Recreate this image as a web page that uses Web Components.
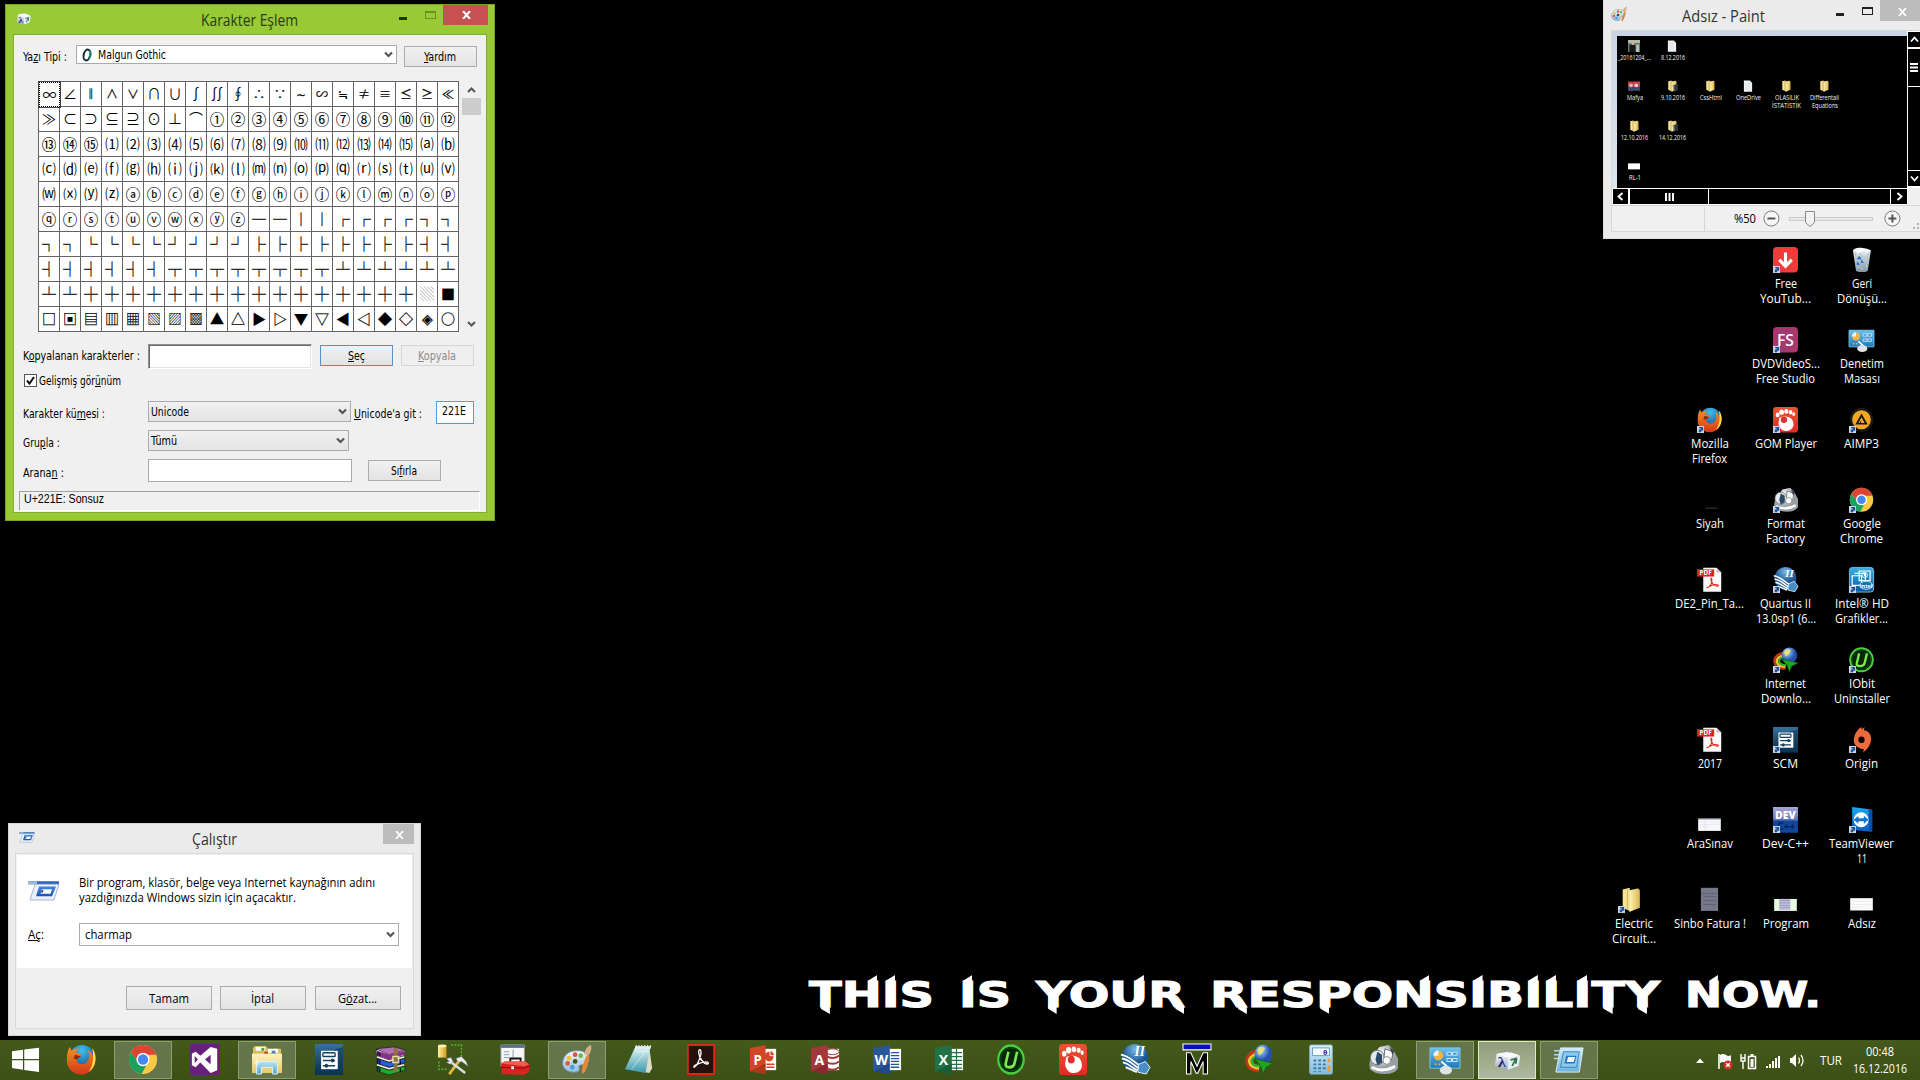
<!DOCTYPE html>
<html lang="tr">
<head>
<meta charset="utf-8">
<title>Masaüstü</title>
<style>
html,body{margin:0;width:1920px;height:1080px;overflow:hidden;background:#000}
body{font-family:"Open Sans","Noto Sans",sans-serif;font-size:12px;color:#000}
</style>
</head>
<body>
<desk-top></desk-top>
<script>
const grad=(id,a,b,x='0',y='1')=>`<linearGradient id="${id}" x2="${x}" y2="${y}"><stop stop-color="${a}"/><stop offset="1" stop-color="${b}"/></linearGradient>`;
const office=(c,d,l,inner)=>`<path d="M18 5h13v22H18z" fill="#fff"/>${inner}<path d="M1 4 19 1v30L1 28z" fill="${c}"/><path d="M1 28 19 31V20z" fill="${d}" opacity=".5"/><text x="10" y="21.5" font-family="Open Sans,sans-serif" font-weight="700" font-size="15" fill="#fff" text-anchor="middle">${l}</text>`;
const pdf=`<path d="M8 1h17l6 6v24H8z" fill="#fafafa"/><path d="M25 1v6h6z" fill="#c9c9c9"/><path d="M0 3h22v9H0z" fill="#e02418"/><text x="11" y="10.5" font-size="8" font-weight="700" font-family="Open Sans,sans-serif" fill="#fff" text-anchor="middle">PDF</text><path d="M13 26c3-1 7-5 6-11-1-3-2 1 0 4 2 4 6 6 8 5s-3-3-8-1-7 4-6 3z" fill="none" stroke="#e02418" stroke-width="1.3"/>`;
const folder=`<defs>${grad('f','#fff3ae','#d9b44c','1','0')}</defs><path d="M6 3l9-2v29l-9-4z" fill="#f7e391"/><path d="M15 4l10-2q3 0 3 4v20l-13 5z" fill="url(#f)"/><path d="M12 3v26" stroke="#caa544"/><path d="M15 4v27" stroke="#fff6c8"/>`;
const ICONS={
start:`<path d="M0 5.500l13-2v12H0zM14.500 3.300 32 1v14.500H14.500zM0 17h13v12L0 27zM14.500 17H32v15l-17.500-2.500z" fill="#fff"/>`,
firefox:`<defs><radialGradient id="b" cx=".5" cy=".2" r=".8"><stop stop-color="#3fc0ee"/><stop offset="1" stop-color="#123a82"/></radialGradient>${grad('o','#f6921e','#d4371a')}</defs><circle cx="17" cy="15" r="14" fill="url(#b)"/><path d="M29 6c5 9 3 21-8 25C10 34-1 26 1 14c0-4 1-8 3-11l2 4q3-3 7-2l-3 4c4 0 7 1 6 4l-5 3c1 4 5 6 9 4 5-2 6-8 3-14 4 2 6 6 6 8z" fill="url(#o)"/><path d="M28 4c6 8 4 20-4 25 5-7 6-15 4-25z" fill="#ffe04a"/><path d="M16 13l-5 3-3-1 2-4z" fill="#8c2a12"/>`,
chrome:`<circle cx="16" cy="16" r="15" fill="#fbc943"/><path d="M3 8.500A15 15 0 0 1 29 8.500L30 11H16a6 6 0 0 0-5.500 7z" fill="#dc4437"/><path d="M3 8.500A15 15 0 0 0 14.500 31L21 19a6 6 0 0 1-10.500-1z" fill="#1ba15e"/><circle cx="16" cy="16" r="7" fill="#fff"/><circle cx="16" cy="16" r="5.400" fill="#4688f1"/>`,
vs:`<path d="M0 0h32v32H0z" fill="#68217a"/><path d="M22 3l7 2v22l-7 3-11-11-5 5-4-2V10l4-2 5 4zM5 12.500v7L8.500 16zM22 11l-6 5 6 5z" fill="#fff"/>`,
explorer:`<defs>${grad('e','#fff3bd','#e8c766')}${grad('e2','#bfe6f7','#4ba0ce')}</defs><path d="M1 4l2-2h12l2 3h14v25H1z" fill="#d8bd62"/><path d="M4 3h10v4H4zM17 5h11v4H17z" fill="#fff"/><path d="M10 4h3v3h-3z" fill="#40a545"/><path d="M13 8h4v3h-4z" fill="#d5382f"/><path d="M21 7h4v3h-4z" fill="#3d80d0"/><path d="M0 10h32v20H0z" fill="url(#e)"/><path d="M5 31V20q0-2 2-2h18q2 0 2 2v11h-5v-7H10v7z" fill="url(#e2)" stroke="#dff4fb"/><path d="M5 14l1 4 3 1-3 1-1 4-1-4-3-1 3-1z" fill="#fff" opacity=".6"/>`,
scm:`<defs>${grad('s','#34729a','#0b2b47')}</defs><path d="M0 0h32v32H0z" fill="url(#s)"/><path d="M0 32C4 18 14 6 32 3v29z" fill="#0b3a5d" opacity=".6"/><rect x="7" y="7" width="19" height="19" fill="#fff"/><g fill="none" stroke="#14415f" stroke-width="1.500"><rect x="9" y="9" width="14" height="4" rx="1"/><path d="M9 17h14M9 22.500h14"/></g><circle cx="20" cy="17" r="2" fill="#14415f"/><circle cx="13" cy="22.500" r="2" fill="#14415f"/>`,
rar:`<g stroke="#111" stroke-width=".6"><path d="M0 7l3-2 17-1 11 2-1 6-15 4-14-3z" fill="#e8e6e6"/><path d="M0 5l19-2 12 3-17 5z" fill="#b56fb9"/><path d="M1 15l13 4 17-4v4l-17 5L1 20z" fill="#2f57e6"/><path d="M1 23l13 4 17-4v4l-17 5L1 28z" fill="#1fa832"/></g><path d="M1 7l13 4 16-4v4l-16 5-13-4z" fill="#8b2f8c"/><path d="M1 13.500l13 4 16-4M1 21.500l13 4 16-4" stroke="#f0efe8" stroke-width="1.600" fill="none"/><path d="M2 8v4m2-3v4M2 15v5m2-4v5M2 23v5m2-4v5M26 17v4M26 25v4" stroke="#0c0c30" stroke-width="1.300"/><path d="M19 4h4v25h-4z" fill="#8c7440"/><path d="M18 13h6v6h-6z" fill="none" stroke="#e6d9a0" stroke-width="1.500"/>`,
tools:`<defs>${grad('t','#fff0a0','#d49a1d','1','0')}</defs><path d="M0 2h9v12H0z" fill="url(#t)"/><ellipse cx="4.500" cy="2" rx="4.500" ry="1.500" fill="#fff4b5"/><path d="M14 1h11v12M1 18v8h10" fill="none" stroke="#56b531" stroke-width="1.500" stroke-dasharray="2 1.500"/><path d="M12 31l11-14" stroke="#e3b83d" stroke-width="3"/><path d="M13 18l16 12" stroke="#d9dde0" stroke-width="2.600"/><path d="M9 15l5-1 2 4-3 3-4-2 3-1zM19 15l6-2 5 5 2 5-4-3-3-2-3 1z" fill="#eceff1" stroke="#73797d" stroke-width=".6"/>`,
toolbox:`<path d="M1 1h25v22H1z" fill="#f8f8f8" stroke="#9a9ca0"/><path d="M1 1h25v3H1z" fill="#56718e"/><path d="M4 8h6M4 11h6M4 14h6M14 6v10" stroke="#8899ac"/><path d="M11 19v-4h11v4" fill="none" stroke="#1c1313" stroke-width="2"/><path d="M1 20l4-2h22l4 3v8l-6 3-23-1z" fill="#d8231f"/><path d="M1 20l4-2h22l4 3-5 2z" fill="#f35b4f"/><path d="M1 24l24 1 6-2" stroke="#7c0d0d" fill="none"/><path d="M12 23h3v3h-3z" fill="#e8e8e8"/>`,
paint:`<defs>${grad('p','#f0f8fd','#94bddb')}</defs><path d="M15 7C26 6 30 13 28 19c-2 4-8 1-10 4 0 3 2 5-3 6C6 30-1 25 1 17 3 10 9 7 15 7z" fill="url(#p)" stroke="#6796b8"/><circle cx="14" cy="11" r="2.500" fill="#e74e3c"/><circle cx="7.500" cy="14.500" r="2.500" fill="#f5bf2e"/><circle cx="6" cy="20" r="2.500" fill="#e35c36"/><circle cx="11" cy="24" r="2.500" fill="#459de2"/><circle cx="20" cy="12" r="2.500" fill="#68ba46"/><circle cx="14" cy="18" r="2.500" fill="#3d5514"/><path d="M22 31c-3-4 3-16 4-19h3c0 6-3 17-7 19z" fill="#e68935"/><path d="M24 11c0-5 3-9 7-10 1 4-1 9-3 11z" fill="#d7b08a"/>`,
notepad:`<defs>${grad('n','#e2f5f7','#3b99ab')}</defs><path d="M27 4l3 21-3 5-6-1z" fill="#e0dcc8"/><path d="M12 3h16l-5 27L1 26z" fill="url(#n)"/><path d="M12 8h14M8 26l14-17" stroke="#fff" opacity=".5"/><path d="M12 2.500h17M13 1v4m3-4v4m3-4v4m3-4v4m3-4v4m3-4v4" stroke="#e6ecec"/>`,
adobe:`<path d="M1 1h30v30H1z" fill="#24110d" stroke="#dd2516" stroke-width="2.200"/><path d="M8 24c-2-2 13-7 16-5 2 2-3 3-7-2-5-6-4-12-2-11 3 2-2 16-7 18z" fill="none" stroke="#fff" stroke-width="1.500"/>`,
ppt:office('#d24625','#8a2611','P','<circle cx="23" cy="13" r="5" fill="#d24625"/><path d="M24 12V7a5 5 0 0 1 5 5z" fill="#d24625" stroke="#fff"/><path d="M20 21h9M20 24h9" stroke="#d24625" stroke-width="1.500"/>'),
access:office('#a4373a','#6d1c20','A','<ellipse cx="24" cy="8" rx="7" ry="3" fill="#fff" stroke="#a4373a"/><path d="M17 12q7 5 14 0M17 18q7 5 14 0M17 24q7 5 14 0" stroke="#a4373a" stroke-width="2" fill="none"/>'),
word:office('#2b579a','#173a72','W','<path d="M20 9h9M20 12h9M20 15h9M20 18h9M20 21h9M20 24h9" stroke="#2b579a" stroke-width="1.300"/>'),
excel:office('#217346','#0f4b29','X','<path d="M18 9h12M18 13h12M18 17h12M18 21h12M18 25h12M24 5v22" stroke="#217346" stroke-width="1.300"/>'),
iobit:`<circle cx="16" cy="16" r="14.500" fill="#06250b" stroke="#49cf3e" stroke-width="2.500"/><circle cx="16" cy="16" r="12" fill="none" stroke="#0a5415"/><path d="M13 8l-3 12q-1 4 4 4t6-4l3-12" fill="none" stroke="#7aea4d" stroke-width="3"/>`,
gom:`<defs>${grad('g','#ee5230','#e02b25')}</defs><rect width="32" height="32" rx="4" fill="url(#g)"/><path d="M8 14c3-3 15-3 17 3 4 8-2 13-8 13-7 0-10-6-10-10z" fill="#fff"/><circle cx="14" cy="16" r="4" fill="#dc332b"/><g fill="#fff"><ellipse cx="6" cy="10" rx="2.500" ry="3"/><ellipse cx="11" cy="6.500" rx="3" ry="3.300"/><ellipse cx="17" cy="5.500" rx="2.600" ry="3"/><ellipse cx="22.500" cy="6.500" rx="2.300" ry="2.800"/><ellipse cx="26.500" cy="9" rx="1.800" ry="2.300"/></g>`,
quartus:`<defs><radialGradient id="q" cx=".5" cy=".2"><stop stop-color="#7bbbe7"/><stop offset="1" stop-color="#195591"/></radialGradient></defs><circle cx="16" cy="14" r="14" fill="url(#q)"/><text x="21" y="12" text-anchor="middle" font-family="Liberation Serif,serif" font-weight="700" font-style="italic" font-size="14" fill="#fff">II</text><path d="M1 11c8 1 13 7 20 11M2 15c8 1 12 7 18 10M3 19c6 1 10 6 16 8M6 24c4 1 8 4 12 5" fill="none" stroke="#fff" stroke-width="1.900"/><path d="M20 21l7-3 5 6-4 7-9-2z" fill="#468fc6" stroke="#e3f2fc"/>`,
m:`<path d="M0 0h32v6H0z" fill="#0712b8" stroke="#fff" stroke-width="1.200"/><path d="M4 31V9h5l7 14 7-14h5v22h-5V18l-6 12h-2L9 18v13z" fill="#000" stroke="#fff" stroke-width="1.200"/>`,
idm:`<defs><radialGradient id="i" cx=".35" cy=".3"><stop stop-color="#fff4a0"/><stop offset=".35" stop-color="#7fb2df"/><stop offset="1" stop-color="#2450b4"/></radialGradient></defs><path d="M15 7C6 8 1 13 2 19c1 6 7 9 14 8" fill="none" stroke="#c8331f" stroke-width="3"/><path d="M15 10C8 11 4 15 5 19c1 4 6 6 11 6" fill="none" stroke="#f2c42e" stroke-width="3"/><path d="M15 13c-5 0-8 3-7 6 1 3 4 4 9 4" fill="none" stroke="#2fb33f" stroke-width="2.600"/><circle cx="21" cy="10.500" r="10" fill="url(#i)"/><path d="M14 6q4-5 9-2l-3 5-4 3z" fill="#f3e66b" opacity=".8"/><path d="M11 15l21 5-8 4-3 7-3-8z" fill="#21a51f" stroke="#0c5d12" stroke-width=".8"/>`,
calc:`<defs>${grad('c','#ddf1fc','#81bbdd')}</defs><rect x="4" y="1" width="24" height="30" rx="1.500" fill="url(#c)" stroke="#8fbcd7"/><path d="M7 4h18v8H7z" fill="#f4fbff" stroke="#6699b9"/><text x="23" y="11" text-anchor="end" font-family="Liberation Mono,monospace" font-size="8" font-weight="700" fill="#215">0</text><g fill="#3c7ba6"><path d="M8 16h3v2H8zm5 0h3v2h-3zm5 0h3v2h-3zM8 20h3v2H8zm5 0h3v2h-3zm5 0h3v2h-3zM8 24h3v2H8zm5 0h3v2h-3zm5 0h3v2h-3zM8 28h3v1H8zm5 0h3v1h-3z"/></g><path d="M23 15h3v4h-3zM23 22h3v7h-3z" fill="#e1a33f"/>`,
format:`<defs><radialGradient id="m" cx=".4" cy=".3"><stop stop-color="#fff"/><stop offset="1" stop-color="#9a9fa3"/></radialGradient></defs><path d="M12 3l10-2 5 5 5 9v10q-3 6-14 6T2 26q-2-8 3-13z" fill="url(#m)"/><circle cx="10" cy="14" r="7.500" fill="#e5e9ec" stroke="#6d7378"/><path d="M10 8l5 3v8l-5 3-2-6z" fill="#294a68"/><path d="M18 5l9 3-2 9-8-3z" fill="#f5f7f8" stroke="#62696e"/><circle cx="20" cy="17" r="4" fill="#fff" stroke="#888"/><path d="M23 3l5 4-2 4z" fill="#33434e"/><path d="M4 24q12 6 25-1" stroke="#fff" stroke-width="3" fill="none"/>`,
control:`<defs>${grad('k','#6cc2ee','#1e77b8')}</defs><path d="M0 4h32v21H0z" fill="url(#k)" stroke="#7cc7ec"/><circle cx="9" cy="12" r="5" fill="#f4b33f"/><path d="M9 12V6.500a5.500 5.500 0 0 0-5.500 5.500z" fill="#e8f3fa"/><path d="M18 8.500h5v3h-5zm6 0h5v3h-5zM18 15h5v3h-5zm6 0h5v3h-5z" fill="#3a93cf" stroke="#d9effb"/><path d="M5 20h2v2H5zm4 0h2v2H9z" fill="#f4b33f"/><path d="M12 18l6 5" stroke="#fff" stroke-width="2"/><ellipse cx="17" cy="27" rx="6.500" ry="4.500" fill="#dfe3e6"/>`,
charmap:`<defs>${grad('h','#fafcff','#a3acc2')}</defs><path d="M4 8l13-3 12 4 2 4-2 11-12 5L2 24z" fill="url(#h)"/><path d="M17 12l14-2-2 14-12 5z" fill="#e6edf5"/><path d="M4 8l13-3 13 5-13 3z" fill="#fafafc"/><path d="M12 6q3-4 7 0" fill="none" stroke="#8b93a4"/><text x="10" y="25" text-anchor="middle" font-family="Liberation Serif,serif" font-weight="700" font-size="19" fill="#1f2a78">λ</text><path d="M20 16l6-2-4 10M27 14l-1 7" fill="none" stroke="#2d7548" stroke-width="2"/>`,
run:`<defs>${grad('r','#d2edfb','#6cb2de')}</defs><path d="M0 7h8M0 11h7M0 15h5" stroke="#aed7ef" stroke-width="1.500"/><path d="M7 4h24l-4 25H2z" fill="url(#r)" stroke="#d5effa"/><path d="M10 8h17l-3 16H7z" fill="#8fcaec" stroke="#3785bd"/><path d="M13 12h11l-2 8H11z" fill="#2e74b8"/><path d="M15 13.500h7.500L21 18.500h-7.500z" fill="#eef8fd"/>`,
runblue:`<defs>${grad('r','#3f86e8','#1b52b8')}</defs><path d="M0 3h31v4H0z" fill="#2f63b8"/><path d="M0 3h9v4H0z" fill="#9bb9e2"/><path d="M7 7h24l-5 21H2z" fill="#eaf1f9" stroke="#9aabc2"/><path d="M11 10h17l-4 13H8z" fill="url(#r)"/><path d="M14 13.500h10l-1.500 6H12.500z" fill="#f8fbff"/><path d="M13.500 18l1.500-3" stroke="#333" stroke-width="1.500"/>`,
fyt:`<rect width="32" height="32" rx="5" fill="#ef3b3a"/><path d="M16 7v17M8 16l8 8 8-8" fill="none" stroke="#fff" stroke-width="4"/>`,
fs:`<rect width="32" height="32" rx="5" fill="#a7386f"/><text x="16" y="23.500" text-anchor="middle" font-family="Open Sans,sans-serif" font-weight="600" font-size="20" fill="#fff">FS</text>`,
bin:`<defs>${grad('z','#e8f0f5','#8396a3')}</defs><path d="M5 4h23l-4 26q-7 3-15 0z" fill="url(#z)"/><path d="M5 4q3-4 11-3t12 3l-4 4-6-3-6 3z" fill="#f7fbfd"/><path d="M8 7l3 20M25 7l-3 20M13 8l6 5M22 12l-5 6M12 24l6 4" stroke="#b5c3cb" stroke-width="1.500"/><path d="M10 15l3-4 3 3-2 2zM16 15l3 5h-4zM10 18l4 4-4 1z" fill="#2f72ce"/>`,
aimp:`<circle cx="16" cy="16" r="15" fill="#191919"/><circle cx="16" cy="16" r="12" fill="#f5a623"/><path d="M16 8l8 14H8z" fill="#1a1a1a"/><path d="M16 13l4 7h-5l1-3-3 3h-1z" fill="#f5a623"/>`,
siyah:`<path d="M11 26.500h15" stroke="#3a3a3a" stroke-width="1.300"/>`,
pdf,folder,
intel:`<defs>${grad('l','#39b0e8','#0a579f')}</defs><rect x=".5" y=".5" width="31" height="31" rx="4" fill="url(#l)" stroke="#8fd0ef"/><path d="M4 11h12v12H4zM7 8h14v10M13 5h14v12H13z" fill="none" stroke="#fff" stroke-width="1.500"/><circle cx="20" cy="10" r="3.500" fill="none" stroke="#fff"/><path d="M19 8l3 2-3 2z" fill="#fff"/><ellipse cx="22" cy="23" rx="8" ry="5" fill="#1371b5" stroke="#d5edf9"/><text x="22" y="26" text-anchor="middle" font-family="Open Sans,sans-serif" font-weight="700" font-size="7" fill="#fff">intel</text>`,
origin:`<path d="M16 3l4-3-1 4c9 1 11 10 8 17-2 5-5 8-9 11l1-4C9 27 4 20 7 12c1-5 5-10 9-12z" fill="#ed6a3e"/><circle cx="16" cy="16" r="4" fill="#000"/>`,
thumb:`<path d="M1.500 14.500h29V30h-29z" fill="#f8f8fb"/><path d="M1.500 15.500h29" stroke="#99a4c2"/><path d="M4 19h24M4 22h24M4 25h12M10 16v12" stroke="#d6dae5" stroke-width=".6"/>`,
adsiz:`<path d="M1.500 14h29v15.500h-29z" fill="#fafafa"/><path d="M4 18h24M4 22h24M4 25h12" stroke="#e2e2e4" stroke-width=".7"/>`,
program:`<path d="M1.500 15h29v15h-29z" fill="#e8fae0"/><path d="M8 15h14v14H8z" fill="#c4c4dd"/><path d="M8 17h14M8 20h14M8 23h14M8 26h14" stroke="#8184b0" stroke-width=".9"/>`,
sinbo:`<path d="M5 1h22v29H5z" fill="#77778a"/><path d="M5 8h22M8 12h16M8 17h16M8 22h16" stroke="#5d5d71" stroke-width="1"/>`,
dev:`<defs>${grad('d','#a9a7d7','#173f8e')}</defs><path d="M0 0h32v32H0z" fill="url(#d)"/><path d="M0 17h32v15H0z" fill="#12469c"/><text x="16" y="15" text-anchor="middle" font-family="Open Sans,sans-serif" font-weight="800" font-size="13.500" fill="#fff">DEV</text><text x="17" y="29" text-anchor="middle" font-family="Open Sans,sans-serif" font-weight="700" font-size="13" fill="#082254">C++</text>`,
team:`<defs>${grad('v','#1ba7f2','#075cc4')}</defs><path d="M4 0l25 3v28L4 29z" fill="url(#v)"/><path d="M25 2l5 2v26l-4 1z" fill="#0a4fa5"/><circle cx="15.500" cy="16" r="9.500" fill="#fff"/><path d="M6 16l6-5v3h7v-3l6 5-6 5v-3h-7v3z" fill="#1275c9"/>`,
file:`<path d="M5 1h16l6 7v23H5z" fill="#eef0f2"/><path d="M8 9h13M8 14h15M8 19h15M8 24h15" stroke="#c7ccd2"/>`,
folderdoc:folder+`<path d="M18 13l14-2v17l-12 3z" fill="#303437"/><path d="M21 13v16" stroke="#ddd" stroke-width="2"/>`,
photo:`<path d="M0 0h32v32H0z" fill="#66756a"/><path d="M0 0h32v8H0z" fill="#b4bca8"/><path d="M4 14l9-4 7 6v16H4z" fill="#15191c"/><circle cx="13" cy="9" r="4" fill="#d9b79b"/><path d="M22 12h7v20h-7z" fill="#c0c6ba"/>`,
mafya:`<path d="M0 4h32v24H0z" fill="#c63d4e"/><path d="M0 18h32v10H0z" fill="#374c78"/><circle cx="8" cy="14" r="5" fill="#e2b3a5"/><circle cx="22" cy="14" r="5" fill="#eed0c6"/>`,
rl:`<path d="M0 9h32v16H0z" fill="#fff"/>`
};

class Base extends HTMLElement{
  constructor(){super();this.attachShadow({mode:'open'})}
  connectedCallback(){if(!this.done){this.done=1;this.render()}}
  set(css,html){this.shadowRoot.innerHTML=`<style>*{box-sizing:border-box}${css}</style>${html}`}
}
class AppIcon extends Base{render(){
  const s=this.getAttribute('size')||32,link=this.hasAttribute('link');
  this.set(`:host{display:block;position:relative;flex:none;width:${s}px;height:${this.getAttribute('h')||s}px}svg{display:block;width:100%;height:100%;overflow:visible}.l{position:absolute;left:0;bottom:0;width:7px;height:7px;overflow:visible}`,
  `<svg viewBox="0 0 32 32" preserveAspectRatio="none">${ICONS[this.getAttribute('name')]}</svg>${link?'<svg class="l" viewBox="0 0 8 8"><path d="M0 0h8v8H0z" fill="#c9d6e6"/><path d="M2 7V4h2V2.500H2.500V1H7v4.500H5.500V4.500L4.500 7z" fill="#234f94"/></svg>':''}`)}}
class FitText extends Base{render(){
  const w=+this.getAttribute('w'),s=this.getAttribute('s');
  this.set(`:host{display:block;flex:none;width:${w}px;white-space:nowrap;${s?`font-size:${s}px;`:''}}span{display:inline-block;transform-origin:0 50%;vertical-align:top}`,'<span><slot></slot></span>');
  const sp=this.shadowRoot.querySelector('span');
  sp.style.transform=`scaleX(${w/sp.getBoundingClientRect().width})`}}
/* A word whose stems end in small blades: up from H I U N L, down from T Y R P */
class BladeWord extends Base{render(){
  const w=+this.getAttribute('w'),t=this.textContent;
  this.set(`:host{display:block;flex:none;position:relative;width:${w}px;height:50px;white-space:nowrap}span{display:inline-block;transform-origin:0 50%;vertical-align:top}
  i{position:absolute;background:#fff}.u{top:5px;height:8px;clip-path:polygon(0 100%,0 70%,100% 0,100% 100%)}.d{top:36px;height:8px;clip-path:polygon(0 0,100% 0,100% 100%,0 35%)}`,`<span>${t}</span>`);
  const sp=this.shadowRoot.querySelector('span');
  sp.style.transform=`scaleX(${w/sp.getBoundingClientRect().width})`;
  const stems={H:[.665,.89,'u'],I:[.247,.753,'u'],U:[.67,.89,'u'],N:[.665,.89,'u'],L:[.144,.44,'u'],T:[.36,.64,'d'],Y:[.37,.63,'d'],R:[.74,.98,'d'],P:[.125,.38,'d']};
  const x0=this.getBoundingClientRect().left,node=sp.firstChild,rg=document.createRange();
  [...t].forEach((c,i)=>{const m=stems[c];if(!m)return;rg.setStart(node,i);rg.setEnd(node,i+1);const b=rg.getBoundingClientRect(),e=document.createElement('i');
    e.className=m[2];e.style.left=b.left-x0+b.width*m[0]+'px';e.style.width=b.width*(m[1]-m[0])+'px';this.shadowRoot.append(e)})}}
class WinButton extends Base{render(){
  this.set(`:host{display:flex;flex:none;align-items:center;justify-content:center;box-sizing:border-box;border:1px solid #acacac;padding-right:1px;background:linear-gradient(#f1f1f1,#e3e3e3)}:host([primary]){border-color:#4f93d2}:host([off]){border-color:#d6d6d6;background:#efefef;color:#8a8a8a}`,'<slot></slot>')}}
class WinCombo extends Base{render(){
  this.set(`:host{display:flex;flex:none;align-items:center;box-sizing:border-box;border:1px solid #a9acae;background:#fff;padding:0 3px 0 2px}:host([flat]){background:linear-gradient(#f1f1f1,#e4e4e4)}svg{width:9px;height:7px;margin-left:auto}`,
  '<slot></slot><svg viewBox="0 0 9 7"><path d="M1 1.500l3.500 3.500L8 1.500" fill="none" stroke="#555" stroke-width="2.200"/></svg>')}}
class WinField extends Base{render(){
  this.set(`:host{display:block;flex:none;box-sizing:border-box;border:1px solid #a9a9a9;background:#fff}:host([sunk]){border:1px solid;border-color:#8f8f8f #fff #fff #8f8f8f;box-shadow:inset 1px 1px #696969,inset -1px -1px #e3e3e3}:host([focus]){border-color:#5a9bd5}`,'<slot></slot>')}}
class CharGrid extends Base{render(){
  const r=(a,b)=>Array.from({length:b-a+1},(_,i)=>String.fromCodePoint(a+i)).join('');
  /* Malgun Gothic draws every weight of a line shape with the same one-pixel stroke */
  const lines='─'.repeat(2)+'│'.repeat(2)+'┌'.repeat(4)+'┐'.repeat(4)+'└'.repeat(4)+'┘'.repeat(4)+'├'.repeat(8)+'┤'.repeat(8)+'┬'.repeat(8)+'┴'.repeat(8)+'┼'.repeat(16);
  const chars='∞∠∥∧∨∩∪∫∬∮∴∵∼∽≒≠≡≤≥≪≫⊂⊃⊆⊇⊙⊥⌒'+r(0x2460,0x246E)+r(0x2474,0x2482)+r(0x249C,0x24B5)+r(0x24D0,0x24E9)+lines+'▒■□'+r(0x25A3,0x25A9)+'▲△▶▷▼▽◀◁◆◇◈○';
  const cls=c=>c>='─'&&c<='╋'?'b':c=='∥'?'v':c=='▒'?'sh':'▧▨▩'.includes(c)?'':'∧∨∴∵∼∽≒≠≡≤≥≪'.includes(c)?'o':c>='①'&&c<='⑮'||c>='ⓐ'&&c<='ⓩ'?'c':c>='⑴'&&c<='⒵'?'p':c>='■'&&c<='○'?'g':'';
  this.set(`:host{display:grid;flex:none;grid-template-columns:repeat(20,21px);grid-auto-rows:25px;width:421px;height:251px;box-sizing:border-box;border:solid #646464;border-width:1px 0 0 1px;background:#fff;font:14px/23px "Noto Sans CJK KR",sans-serif}
  i{font-style:normal;text-align:center;border:solid #646464;border-width:0 1px 1px 0;overflow:hidden;display:flex;justify-content:center}
  .b{font-size:13.500px;-webkit-text-stroke:.35px #222}.v{font:11px/23px "DejaVu Sans"}.o{font-size:12px;-webkit-text-stroke:.2px #000}.c{font-size:14.500px;-webkit-text-stroke:.1px #000}.p{font-size:13.500px}.g{-webkit-text-stroke:.25px #000}.sh{color:#999}
  i.sel{outline:1px solid #444;border:1px dotted #000;z-index:1;line-height:22px}`,
  [...chars].map((c,k)=>`<i class="${k?cls(c):'sel'}">${c}</i>`).join(''))}}
class DeskWindow extends Base{render(){
  this.set(`:host{position:absolute;display:flex;flex-direction:column;box-sizing:border-box;background:var(--frame);border:1px solid var(--edge)}
  header{display:flex;flex:none;position:relative}`,'<header><slot name="bar"></slot></header><slot></slot>')}}
class CharmapWindow extends Base{render(){
  this.set(`:host{display:contents}
  desk-window{left:5px;top:4px;width:490px;height:517px;--frame:#97ca35;--edge:#78a22c}
  .bar{display:flex;width:488px;height:29px;line-height:20px}
  .min{width:8px;height:3px;background:#26330d;margin:12px 0 0 101px}.max{width:11px;height:8px;border:1px solid #6b8f26;border-top-width:2px;margin:6px 0 0 18px}
  .x{width:45px;height:20px;margin-left:7px;background:#c75050;display:flex;align-items:center;justify-content:center;padding-left:1px}
  main{flex:1;margin:0 7px 7px;background:#f0f0f0;border:1px solid #82ac34;font:11.500px/16px "DejaVu Sans Condensed","DejaVu Sans",sans-serif;display:flex;flex-direction:column}
  .r{display:flex;flex:none;align-items:flex-start;padding-left:10px}
  .r>fit-text:first-child{margin-left:-1px;margin-right:1px}
  win-button{width:73px;height:21px}
  .sb{width:19px;height:251px;margin-left:3px;display:flex;flex-direction:column;align-items:center}.sb i{width:19px;height:17px;background:#cdcdcd;margin-top:5px}
  .sb svg{width:9px;height:6px}.ck{width:13px;height:13px;border:1px solid #555;background:#fff}.ck svg{display:block}
  .st{display:flex;flex:none;margin:9px 0 0 5px;width:461px;height:20px;border:1px solid;border-color:#a0a0a0 #fff #fff #a0a0a0;padding-left:4px;font-family:"Liberation Sans";line-height:15px}`,
  `<desk-window><div slot="bar" class="bar"><app-icon name="charmap" size="15" style="margin:6px 0 0 10px"></app-icon><fit-text w="97" s="15.500" style="margin:5px 0 0 170px;color:#2c3b10">Karakter Eşlem</fit-text>
  <div class="min"></div><div class="max"></div><div class="x"><svg width="9" height="8"><path d="M1 0l7 8M8 0L1 8" stroke="#fff" stroke-width="2"/></svg></div></div>
  <main>
  <div class="r" style="margin-top:10px;height:22px"><fit-text w="44" style="margin-top:4px">Ya<u>z</u>ı Tipi :</fit-text><win-combo style="width:321px;height:19px;margin-left:8px"><svg width="12" height="14" viewBox="0 0 12 14" style="margin:0 5px 0 2px;width:12px;height:14px"><ellipse cx="6" cy="7" rx="3.300" ry="5.500" transform="rotate(14 6 7)" fill="none" stroke="#0a2b30" stroke-width="2"/><path d="M8.500 2.500q2 4-1 8" fill="none" stroke="#26877d" stroke-width="2"/></svg><fit-text w="68">Malgun Gothic</fit-text></win-combo><win-button style="margin:1px 0 0 7px"><fit-text w="32"><u>Y</u>ardım</fit-text></win-button></div>
  <div class="r" style="margin-top:14px;padding-left:24px"><char-grid></char-grid><div class="sb"><svg viewBox="0 0 9 6" style="margin-top:6px"><path d="M1 5l3.500-3.500L8 5" fill="none" stroke="#555" stroke-width="2"/></svg><i></i><svg viewBox="0 0 9 6" style="margin-top:auto;margin-bottom:5px"><path d="M1 1l3.500 3.500L8 1" fill="none" stroke="#555" stroke-width="2"/></svg></div></div>
  <div class="r" style="margin-top:12px;height:26px"><fit-text w="117" style="margin-top:4px">K<u>o</u>pyalanan karakterler :</fit-text><win-field sunk style="width:164px;height:25px;margin-left:7px"></win-field><win-button primary style="margin:1px 0 0 8px"><fit-text w="17"><u>S</u>eç</fit-text></win-button><win-button off style="margin:1px 0 0 8px"><fit-text w="38"><u>K</u>opyala</fit-text></win-button></div>
  <div class="r" style="margin-top:4px;height:14px"><div class="ck"><svg width="11" height="11"><path d="M2 5.500l2.500 3L9 2" fill="none" stroke="#111" stroke-width="2"/></svg></div><fit-text w="82" style="margin:-1px 0 0 2px">Gelişmiş gör<u>ü</u>nüm</fit-text></div>
  <div class="r" style="margin-top:13px;height:23px"><fit-text w="82" style="margin-top:5px">Karakter kü<u>m</u>esi :</fit-text><win-combo flat style="width:203px;height:21px;margin-left:42px"><fit-text w="38">Unicode</fit-text></win-combo><fit-text w="68" style="margin:5px 0 0 3px"><u>U</u>nicode'a git :</fit-text><win-field focus style="width:38px;height:23px;margin-left:14px"><fit-text w="24" style="margin:1px 0 0 5px">221E</fit-text></win-field></div>
  <div class="r" style="margin-top:6px;height:21px"><fit-text w="37" style="margin-top:5px">Gru<u>p</u>la :</fit-text><win-combo flat style="width:201px;height:21px;margin-left:87px"><fit-text w="26">Tümü</fit-text></win-combo></div>
  <div class="r" style="margin-top:8px;height:23px"><fit-text w="41" style="margin-top:6px">Arana<u>n</u> :</fit-text><win-field style="width:204px;height:23px;margin-left:83px"></win-field><win-button style="margin:1px 0 0 16px"><fit-text w="26">Sı<u>f</u>ırla</fit-text></win-button></div>
  <div class="st"><fit-text w="80" s="12">U+221E: Sonsuz</fit-text></div>
  </main></desk-window>`)}}
class RunWindow extends Base{render(){
  this.set(`:host{display:contents}
  desk-window{left:8px;top:823px;width:413px;height:213px;--frame:#ebebeb;--edge:#d5d5d5}
  .bar{display:flex;width:411px;height:29px;line-height:20px}.x{width:31px;height:20px;margin-left:146px;background:#bcbcbc;display:flex;align-items:center;justify-content:center;padding:1px 0 0 1px}
  main{flex:1;margin:0 6px 6px;border:1px solid #d9d9d9;background:#f0f0f0;font:12px/15px "Open Sans",sans-serif;display:flex;flex-direction:column}
  .w{background:#fff;height:113px;margin:1px 1px 0}.r{display:flex;align-items:flex-start}
  win-button{width:86px;height:24px;margin-left:8px}`,
  `<desk-window><div slot="bar" class="bar"><app-icon name="runblue" size="16" h="13" style="margin:7px 0 0 10px"></app-icon><fit-text w="45" s="15.500" style="margin:5px 0 0 157px;color:#333">Çalıştır</fit-text><div class="x"><svg width="9" height="8"><path d="M1 0l7 8M8 0L1 8" stroke="#fff" stroke-width="1.800"/></svg></div></div>
  <main><div class="w"><div class="r" style="padding:20px 0 0 11px"><app-icon name="runblue" size="32" h="24" style="margin-top:4px"></app-icon><div style="margin-left:19px"><fit-text w="296">Bir program, klasör, belge veya Internet kaynağının adını</fit-text><fit-text w="217">yazdığınızda Windows sizin için açacaktır.</fit-text></div></div>
  <div class="r" style="padding:18px 0 0 11px"><fit-text w="16" style="margin-top:4px"><u>Aç</u>:</fit-text><win-combo style="width:320px;height:23px;margin-left:35px;padding-left:5px"><fit-text w="47">charmap</fit-text></win-combo></div></div>
  <div class="r" style="margin:18px 0 0 102px"><win-button><fit-text w="40">Tamam</fit-text></win-button><win-button><fit-text w="23">İptal</fit-text></win-button><win-button style="margin-left:9px"><fit-text w="39">G<u>ö</u>zat...</fit-text></win-button></div></main></desk-window>`)}}
class PaintWindow extends Base{render(){
  const it=(c,r,n,...l)=>`<div class="it" style="grid-column:${c};grid-row:${r}"><app-icon name="${n}" size="12"></app-icon>${l.map(([t,w])=>`<fit-text w="${w}">${t}</fit-text>`).join('')}</div>`;
  const arr=d=>`<svg width="9" height="9" viewBox="0 0 9 9"><path d="${d}" fill="none" stroke="#fff" stroke-width="1.800"/></svg>`;
  const zb=p=>`<svg width="17" height="17" viewBox="0 0 17 17"><circle cx="8.500" cy="8.500" r="7.600" fill="#f6f6f6" stroke="#777"/><path d="${p}" stroke="#555" stroke-width="2"/></svg>`;
  this.set(`:host{display:contents}
  desk-window{left:1603px;top:0;width:330px;height:239px;--frame:#ebebeb;--edge:#dcdcdc;border-top:0}
  .bar{display:flex;width:316px;height:30px;line-height:20px}
  .min{width:8px;height:3px;background:#222;margin:13px 0 0 71px}.max{width:11px;height:8px;border:1px solid #222;border-top-width:2px;margin:7px 0 0 18px}
  .x{width:40px;height:21px;margin-left:7px;background:#bcbcbc;display:flex;align-items:center;padding:2px 0 0 18px}
  main{margin-left:7px;width:310px;height:202px;border:1px solid #d8d8d8;background:#f0f0f0;display:flex;flex-direction:column}
  .top{display:flex;height:157px}.cv{width:296px;padding:5px 0 0 5px;background:linear-gradient(#c9d5e5,#dbe5f1)}
  .px{height:152px;background:#000;color:#f2f2f2;display:grid;grid-template:repeat(4,40px)/repeat(6,38px);overflow:hidden;font-size:6.800px;line-height:7.500px}
  .it{display:flex;flex-direction:column;align-items:center;padding-top:3.500px;margin-left:-2px;margin-right:1px}.it app-icon{margin:0 1px 2.500px 0}
  .vs{width:13px;background:#000;border:solid #fff;border-width:1px 0 0 1px;display:flex;flex-direction:column}.vs div{border-bottom:2px solid #fff;display:flex;align-items:center;justify-content:center}
  .hs{width:296px;height:17px;background:#000;border:1px solid #fff;display:flex}.hs div{display:flex;align-items:center;justify-content:center;border-right:2px solid #fff}
  .st{display:flex;align-items:center;height:26px;border-top:1px solid #d5d5d5}.st b{width:94px;height:24px;border-right:1px solid #d5d5d5}
  .sl{width:85px;height:4px;border:1px solid #ccc;background:#e8e8e8;margin:0 11px 0 9px;display:flex;align-items:center;padding-left:15px}`,
  `<desk-window><div slot="bar" class="bar"><app-icon name="paint" size="16" style="margin:6px 0 0 7px"></app-icon><fit-text w="83" s="15.500" style="margin:5.500px 0 0 55px;color:#333">Adsız - Paint</fit-text><div class="min"></div><div class="max"></div><div class="x"><svg width="9" height="8"><path d="M1 0l7 8M8 0L1 8" stroke="#fff" stroke-width="1.800"/></svg></div></div>
  <main><div class="top"><div class="cv"><div class="px">${it(1,1,'photo',['_20161204_...',33])}${it(2,1,'file',['8.12.2016',24])}${it(1,2,'mafya',['Mafya',16])}${it(2,2,'folderdoc',['9.10.2016',24])}${it(3,2,'folder',['CssHtml',22])}${it(4,2,'file',['OneDrive',25])}${it(5,2,'folder',['OLASILIK',24],['İSTATİSTİK',29])}${it(6,2,'folder',['Differentail',29],['Equations',26])}${it(1,3,'folder',['12.10.2016',27])}${it(2,3,'folderdoc',['14.12.2016',27])}${it(1,4,'rl',['RL-1',12])}</div></div>
  <div class="vs"><div style="height:17px">${arr('M1 6.500l3.500-4 3.500 4')}</div><div style="height:38px;border-bottom-width:1px"><svg width="8" height="9"><path d="M0 1h8M0 4.500h8M0 8h8" stroke="#fff" stroke-width="2"/></svg></div><div style="flex:1;border-bottom-width:1px"></div><div style="height:17px">${arr('M1 2.500l3.500 4 3.500-4')}</div></div></div>
  <div class="hs"><div style="width:17px">${arr('M6.500 1l-4 3.500 4 3.500')}</div><div style="width:79px;border-right-width:1px"><svg width="9" height="8"><path d="M1 0v8M4.500 0v8M8 0v8" stroke="#fff" stroke-width="2"/></svg></div><div style="flex:1;border-right-width:1px"></div><div style="width:16px;border:0">${arr('M2.500 1l4 3.500-4 3.500')}</div></div>
  <div class="st"><b></b><fit-text w="22" style="margin:0 7px 0 29px">%50</fit-text>${zb('M4.500 8.500h8')}<div class="sl"><svg width="10" height="16" viewBox="0 0 10 16" style="flex:none"><path d="M.5.5h9v11L5 15.500.5 11.500z" fill="#f2f2f2" stroke="#888"/></svg></div>${zb('M4.500 8.500h8M8.500 4.500v8')}<svg width="7" height="7" style="margin:16px 0 0 12px"><path d="M4 1h2M4 5h2M0 5h2" stroke="#b5b5b5" stroke-width="2"/></svg></div></main></desk-window>`)}}
class DesktopIcon extends Base{render(){
  const l=this.getAttribute('label').split('|').map(s=>s.split('~')),n=this.getAttribute('icon');
  this.set(`:host{display:flex;flex-direction:column;align-items:center;padding-top:7px;line-height:15px;font-size:12px;color:#fff;width:76px;box-sizing:border-box}app-icon{margin:0 ${n=='folder'?7:0}px 3px 0}`,
  `<app-icon name="${n}" size="${this.getAttribute('size')||25}" h="25.500" ${this.hasAttribute('link')?'link':''}></app-icon>${l.map(([t,w])=>`<fit-text w="${w}">${t}</fit-text>`).join('')}`)}}
class TaskBar extends Base{render(){
  const names='firefox,chrome*,vs,explorer*,scm,rar,tools,toolbox,paint*,notepad,adobe,ppt,access,word,excel,iobit,gom,quartus,m,idm,calc,format,control*,charmap#,run*'.split(',');
  this.set(`:host{position:absolute;left:0;top:1040px;width:1920px;height:40px;background:linear-gradient(#435a1b,#3c5015);display:flex;align-items:center;color:#fff}
  .s{margin:-1px 10px 0 12px}.t{width:58px;height:38px;margin:0 2px;padding:0 0 1px 0;display:flex;align-items:center;justify-content:center;border:1px solid transparent}
  .on{background:#647549;border-color:#8e9c76}.hot{background:linear-gradient(#8f9c78,#b0b99f);border-color:#dfe5d5}
  .tray{display:flex;align-items:center;margin-left:95px;height:40px}.clock{display:flex;flex-direction:column;align-items:center;line-height:17px;margin-left:11px}`,
  `<app-icon class="s" name="start" size="27" h="25"></app-icon><div style="width:1px"></div>${names.map(n=>{const k=n.replace(/[*#]/,'');return`<div class="t ${n.endsWith('*')?'on':n.endsWith('#')?'hot':''}"><app-icon name="${k}" size="${/m$|adobe|ppt|iobit|idm/.test(k)?28:k=='charmap'?28:30}" h="${k=='charmap'?24:31}"></app-icon></div>`}).join('')}
  <div class="tray"><svg width="110" height="20" viewBox="-1 0 110 20" style="margin-top:2px"><path d="M0 12l4-4.500L8 12z" fill="#fff"/>
  <path d="M23 3v15" stroke="#fff" stroke-width="1.600"/><path d="M24 4q3-2 6 0t5 0v8q-2 2-5 0t-6 0z" fill="#fff"/><circle cx="32" cy="14" r="4.500" fill="#d3302a"/><path d="M30.200 12.200l3.600 3.600m0-3.600l-3.600 3.600" stroke="#fff" stroke-width="1.300"/>
  <path d="M52.500 5.500h7v12h-7z" fill="none" stroke="#fff" stroke-width="1.500"/><path d="M54.500 3h3v2h-3zM54.500 8h3v8h-3z" fill="#fff"/><path d="M45 3v4m4-4v4m-4 0h4v3h-4zM47 10v8" stroke="#fff" stroke-width="1.400" fill="none"/>
  <path d="M70 15h2v2h-2zM73 13h2v4h-2zM76 10h2v7h-2zM79 7h2v10h-2zM82 5h2v12h-2z" fill="#fff"/>
  <path d="M94 7h2l4-4v13l-4-4h-2z" fill="#fff"/><path d="M102.500 6.500q2 3 0 6M105 4q4 5.500 0 11" fill="none" stroke="#fff" stroke-width="1.300"/></svg>
  <fit-text w="22" style="margin-left:15px">TUR</fit-text><div class="clock"><fit-text w="28">00:48</fit-text><fit-text w="54">16.12.2016</fit-text></div></div>`)}}
class DeskTop extends Base{render(){
  const I=[[3,1,'fyt','Free~22|YouTub...~51',1],[4,1,'bin','Geri~20|Dönüşü...~50'],[3,2,'fs','DVDVideoS...~68|Free Studio~59',1],[4,2,'control','Denetim~44|Masası~36'],
  [2,3,'firefox','Mozilla~38|Firefox~35',1],[3,3,'gom','GOM Player~62',1],[4,3,'aimp','AIMP3~35',1],[2,4,'siyah','Siyah~28'],[3,4,'format','Format~38|Factory~39',1],[4,4,'chrome','Google~38|Chrome~43',1],
  [2,5,'pdf','DE2_Pin_Ta...~69'],[3,5,'quartus','Quartus II~51|13.0sp1 (6...~60',1],[4,5,'intel','Intel® HD~54|Grafikler...~53',1],[3,6,'idm','Internet~41|Downlo...~50',1],[4,6,'iobit','IObit~26|Uninstaller~56',1],
  [2,7,'pdf','2017~24'],[3,7,'scm','SCM~25',1],[4,7,'origin','Origin~33',1],[2,8,'thumb','AraSınav~46'],[3,8,'dev','Dev-C++~47',1],[4,8,'team','TeamViewer~65|11~10',1],
  [1,9,'folder','Electric~38|Circuit...~44',1],[2,9,'sinbo','Sinbo Fatura !~72'],[3,9,'program','Program~46'],[4,9,'adsiz','Adsız~28']];
  this.set(`:host{display:block;position:relative;width:1920px;height:1080px;background:#000;overflow:hidden}
  .icons{position:absolute;left:1595.500px;top:240px;display:grid;grid-template:repeat(9,80px)/repeat(4,76px)}
  .motto{position:absolute;left:809px;top:970px;display:flex;gap:25px;color:#fff;font:700 35px/50px "DejaVu Sans Condensed","DejaVu Sans",sans-serif;-webkit-text-stroke:1px #fff}`,
  `<div class="motto"><blade-word w="125">THIS</blade-word><blade-word w="52">IS</blade-word><blade-word w="149">YOUR</blade-word><blade-word w="450">RESPONSIBILITY</blade-word><blade-word w="136">NOW.</blade-word></div>
  <div class="icons">${I.map(([c,r,n,l,k])=>`<desktop-icon style="grid-column:${c};grid-row:${r}" icon="${n}" label="${l}" ${k?'link':''}></desktop-icon>`).join('')}</div>
  <charmap-window></charmap-window><run-window></run-window><paint-window></paint-window><task-bar></task-bar>`)}}
const defs={'app-icon':AppIcon,'win-button':WinButton,'win-combo':WinCombo,'win-field':WinField,'char-grid':CharGrid,'desk-window':DeskWindow,'charmap-window':CharmapWindow,'run-window':RunWindow,'paint-window':PaintWindow,'desktop-icon':DesktopIcon,'task-bar':TaskBar,'desk-top':DeskTop,'blade-word':BladeWord,'fit-text':FitText};
for(const n in defs)customElements.define(n,defs[n]);
</script>
</body>
</html>
